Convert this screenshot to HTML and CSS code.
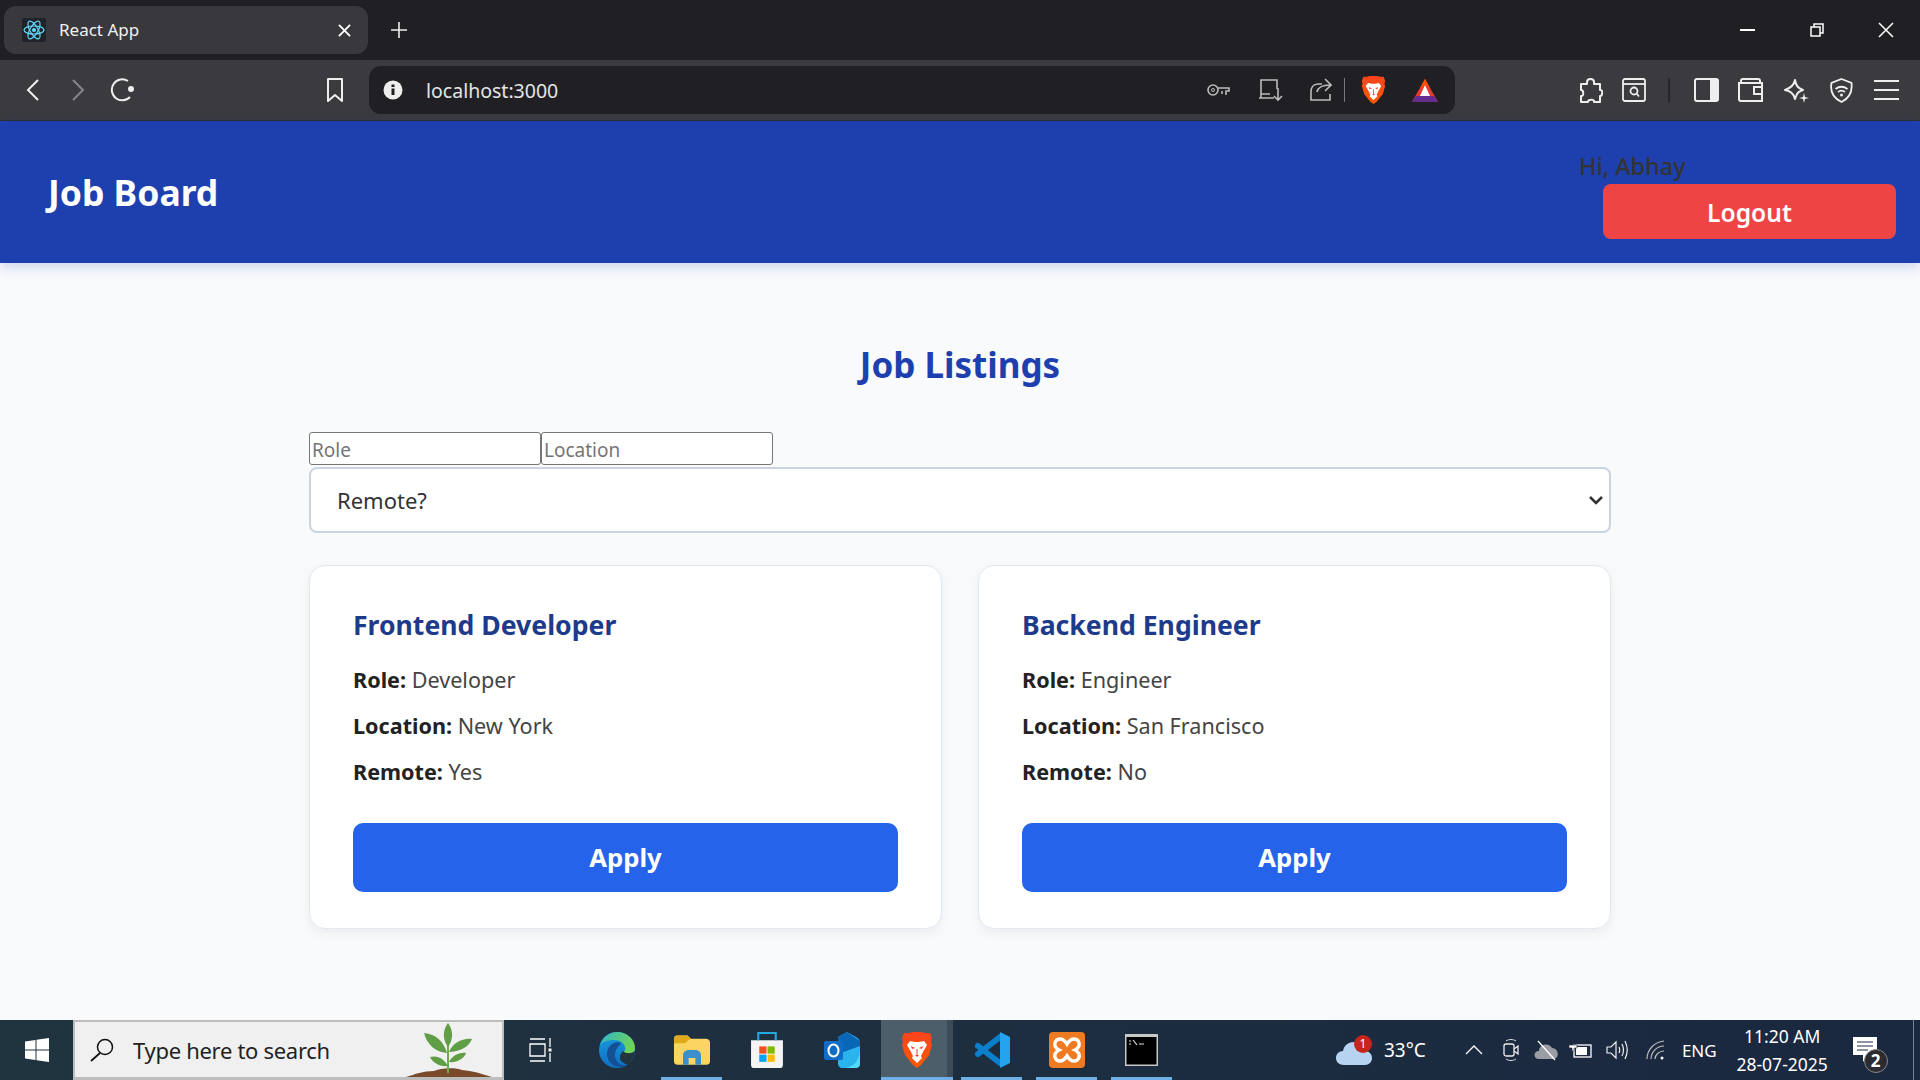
FILE: index.html
```html
<!DOCTYPE html>
<html lang="en">
<head>
  <meta charset="UTF-8" />
  <title>React App</title>
  <link rel="stylesheet" href="styles.css">
</head>
<body>

  <svg class="defs" width="0" height="0">
    <defs>
      <linearGradient id="edgeBlue" x1="0" y1="0" x2="0" y2="1">
        <stop offset="0" stop-color="#1b9de2"/>
        <stop offset="1" stop-color="#0f6fc0"/>
      </linearGradient>
      <linearGradient id="edgeGreen" x1="0" y1="0" x2="1" y2="0.4">
        <stop offset="0" stop-color="#2fb5c8"/>
        <stop offset="1" stop-color="#6fd45a"/>
      </linearGradient>
      <linearGradient id="braveFill" x1="0" y1="0" x2="0" y2="1">
        <stop offset="0" stop-color="#f8431f"/>
        <stop offset="1" stop-color="#ff5a00"/>
      </linearGradient>
    </defs>
    <symbol id="brave" viewBox="0 0 30 36">
      <path d="M7 1l3-1h10l3 1h5l2 5-1 4 1 3-3 10-8 10-4 3-4-3-8-10-3-10 1-3-1-4 2-5z" fill="url(#braveFill)"/>
      <path d="M8 9l5 1h4l5-1 3 4-4 7-2 4 1 2-5 5-5-5 1-2-2-4-4-7z" fill="#fff"/>
      <path d="M9 14l4 2-3 1zM21 14l-4 2 3 1zM13 23h4l-2 2z" fill="#f8431f"/>
      <path d="M15 17v6" stroke="#f8431f"/>
    </symbol>
  </svg>

  <!-- browser tabs -->
  <div class="tabstrip">
    <div class="tab">
      <svg class="favicon" viewBox="0 0 24 24">
        <rect width="24" height="24" rx="2" fill="#20232a"/>
        <g fill="none" stroke="#61dafb" stroke-width="1.2">
          <ellipse cx="12" cy="12" rx="10" ry="4"/>
          <ellipse cx="12" cy="12" rx="10" ry="4" transform="rotate(60 12 12)"/>
          <ellipse cx="12" cy="12" rx="10" ry="4" transform="rotate(120 12 12)"/>
        </g>
        <circle cx="12" cy="12" r="2" fill="#61dafb"/>
      </svg>
      <span class="tab-title">React App</span>
      <svg class="tab-close" viewBox="0 0 14 14"><path d="M1 1l12 12M13 1L1 13" stroke="#fff" stroke-width="2"/></svg>
    </div>
    <svg class="new-tab" viewBox="0 0 16 16"><path d="M8 0v16M0 8h16" stroke="#eee" stroke-width="1.6"/></svg>
    <div class="window-btns">
      <svg class="win-min" viewBox="0 0 15 2"><path d="M0 1h15" stroke="#fff" stroke-width="2"/></svg>
      <svg class="win-restore" viewBox="0 0 14 14"><path d="M1 4h9v9H1zM4 4V1h9v9h-3" fill="none" stroke="#fff" stroke-width="1.5"/></svg>
      <svg class="win-close" viewBox="0 0 16 16"><path d="M1 1l14 14M15 1L1 15" stroke="#fff" stroke-width="1.5"/></svg>
    </div>
  </div>

  <!-- browser toolbar -->
  <div class="toolbar">
    <svg class="nav-back" viewBox="0 0 13 22"><path d="M12 1L2 11l10 10" fill="none" stroke="#eee" stroke-width="2"/></svg>
    <svg class="nav-forward" viewBox="0 0 13 22"><path d="M1 1l10 10L1 21" fill="none" stroke="#85858a" stroke-width="2"/></svg>
    <svg class="nav-reload" viewBox="0 0 25 24"><path d="M20 19a10.500 10.500 0 1 1-2-16" fill="none" stroke="#eee" stroke-width="2"/><circle cx="21" cy="11" r="3" fill="#eee"/></svg>
    <svg class="nav-bookmark" viewBox="0 0 18 24"><path d="M2 1h14v22l-7-6-7 6z" fill="none" stroke="#eee" stroke-width="2" stroke-linejoin="round"/></svg>
    <div class="urlbar">
      <svg class="url-info" viewBox="0 0 20 20"><circle cx="10" cy="10" r="9.500" fill="#eee"/><path d="M8.500 8.500h3V15h-3zM8.500 4.500h3v2.500h-3z" fill="#202024"/></svg>
      <span class="url-text">localhost:3000</span>
      <svg class="url-key" viewBox="0 0 23 14"><circle cx="6" cy="7" r="5" fill="none" stroke="#bbb" stroke-width="1.600"/><circle cx="6" cy="7" r="1.500" fill="none" stroke="#bbb"/><path d="M11 5h11v3h-3v4M15 8v3" fill="none" stroke="#bbb" stroke-width="1.600"/></svg>
      <svg class="url-install" viewBox="0 0 25 24"><path d="M19 11V2H3v14M1 20h15M3 20v-4h9" fill="none" stroke="#bbb" stroke-width="1.600"/><path d="M20 10v12M16 18l4 4 4-4" fill="none" stroke="#bbb" stroke-width="1.600"/></svg>
      <svg class="url-share" viewBox="0 0 23 24"><path d="M13 6H9c-5 0-7 4-7 8v8h19v-6" fill="none" stroke="#bbb" stroke-width="1.600"/><path d="M8 14c1-5 5-7 13-7M16 1l6 6-6 6" fill="none" stroke="#bbb" stroke-width="1.600"/></svg>
      <span class="url-sep"></span>
      <svg class="url-brave"><use href="#brave"/></svg>
      <svg class="url-bat" viewBox="0 0 26 23"><path d="M13 0l13 23H0z" fill="#e8392f"/><path d="M0 23l4-6h18l4 6z" fill="#662d91"/><path d="M13 6l5 11H8z" fill="#fff"/><path d="M13 0l5 9-5-3-5 3z" fill="#ff5000"/></svg>
    </div>
    <div class="toolbar-right">
      <svg class="tool-puzzle" viewBox="0 0 25 25"><path d="M9 4c0-4 7-4 7 0v2h6v6c3-1 3 6 0 6v6h-6c1-3-6-3-6 0H3v-6c3 1 3-6 0-6V6h6z" fill="none" stroke="#eee" stroke-width="2" stroke-linejoin="round"/></svg>
      <svg class="tool-reader" viewBox="0 0 24 24"><rect x="1" y="1" width="22" height="22" rx="2" fill="none" stroke="#eee" stroke-width="1.800"/><path d="M1 6h22" stroke="#eee" stroke-width="1.800"/><circle cx="12" cy="13" r="3.500" fill="none" stroke="#eee" stroke-width="1.800"/><path d="M14.500 15.500l2.500 3" stroke="#eee" stroke-width="1.800"/></svg>
      <span class="tool-sep"></span>
      <svg class="tool-panel" viewBox="0 0 25 24"><rect x="1" y="1" width="23" height="22" rx="2" fill="none" stroke="#eee" stroke-width="2"/><rect x="16" y="1" width="8" height="22" fill="#eee"/></svg>
      <svg class="tool-wallet" viewBox="0 0 25 24"><path d="M3 5V3c0-1 1-2 2-2h15c1 0 2 1 2 2v2M1 5h23v18H3c-1 0-2-1-2-2zM24 9h-8v7h8" fill="none" stroke="#eee" stroke-width="2"/></svg>
      <svg class="tool-stars" viewBox="0 0 25 25"><path d="M11 2c1 6 3 8 8 10-3 1-5 2-6 4l-2 5c-1-5-4-8-10-9 6-2 9-5 10-10z" fill="none" stroke="#eee" stroke-width="2" stroke-linejoin="round"/><path d="M20 15l1 4 4 1-4 1-1 4-1-4-4-1 4-1z" fill="#eee"/></svg>
      <svg class="tool-shield" viewBox="0 0 23 25"><path d="M11.500 1l10 4c1 8-2 15-10 19C3 20 0 13 1.500 5z" fill="none" stroke="#eee" stroke-width="1.800"/><path d="M5.500 11c4-3 8-3 12 0M8 14c2-1.500 5-1.500 7 0" fill="none" stroke="#eee" stroke-width="1.800"/><circle cx="11.500" cy="17" r="1.500" fill="#eee"/></svg>
      <svg class="tool-menu" viewBox="0 0 25 22"><path d="M0 2h25M0 11h25M0 20h25" stroke="#eee" stroke-width="2"/></svg>
    </div>
  </div>

  <!-- the app -->
  <header class="app-header">
    <h1>Job Board</h1>
    <div class="user-box">
      <span class="greeting">Hi, Abhay</span>
      <button class="logout-btn">Logout</button>
    </div>
  </header>

  <main class="content">
    <h2 class="page-title">Job Listings</h2>

    <div class="filters">
      <input class="filter-input" type="text" placeholder="Role"><input class="filter-input" type="text" placeholder="Location">
      <select class="filter-select">
        <option>Remote?</option>
        <option>Yes</option>
        <option>No</option>
      </select>
    </div>

    <div class="job-grid">
      <div class="job-card">
        <h3>Frontend Developer</h3>
        <p><strong>Role:</strong> Developer</p>
        <p><strong>Location:</strong> New York</p>
        <p><strong>Remote:</strong> Yes</p>
        <button class="apply-btn">Apply</button>
      </div>
      <div class="job-card">
        <h3>Backend Engineer</h3>
        <p><strong>Role:</strong> Engineer</p>
        <p><strong>Location:</strong> San Francisco</p>
        <p><strong>Remote:</strong> No</p>
        <button class="apply-btn">Apply</button>
      </div>
    </div>
  </main>

  <!-- windows taskbar -->
  <footer class="taskbar">
    <div class="start">
      <svg viewBox="0 0 24 24"><path d="M0 3.500l10.500-1.500v9.500H0zM11.500 1.800L24 0v11.500H11.500zM0 12.500h10.500V22L0 20.500zM11.500 12.500H24V24l-12.500-1.800z" fill="#fff"/></svg>
    </div>
    <div class="search">
      <svg class="search-icon" viewBox="0 0 24 24"><circle cx="15" cy="9" r="7.500" fill="none" stroke="#111" stroke-width="1.500"/><path d="M10 15L1 23" stroke="#111" stroke-width="1.700"/></svg>
      <span class="search-text">Type here to search</span>
      <svg class="search-plant" viewBox="0 0 100 56">
        <path d="M0 56c14-3 22-8 36-8 5-3 22-4 28-1 12 1 24 5 36 9z" fill="#7a4a2c"/>
        <path d="M50 50V8" stroke="#6fae4f" stroke-width="2"/>
        <path d="M50 0c6 8 5 17 0 24-5-7-6-16 0-24zM26 10c12 1 20 9 23 20-11-1-20-8-23-20zM74 16c-3 8-13 13-23 13 4-9 13-14 23-13zM32 34c8-2 14 2 18 9-8 1-15-3-18-9zM68 30c-2 6-10 10-17 9 3-6 10-10 17-9z" fill="#5f9e45"/>
      </svg>
    </div>
    <div class="task-slot">
      <svg class="task-view" viewBox="0 0 24 24"><path d="M2 1h15M2 23h15M2 6h15v12H2zM22 0v9M22 15v9" fill="none" stroke="#fff" stroke-width="1.300"/><rect x="20.500" y="10.500" width="3" height="3" fill="#fff"/></svg>
    </div>
    <div class="task-slot">
      <svg class="task-icon" viewBox="0 0 36 36">
        <circle cx="18" cy="18" r="18" fill="url(#edgeBlue)"/>
        <path d="M1 13C4 5 11 0 18 0c10 0 18 7 18 16 0 4-3 6-7 6-3 0-5-1-5-2 2-1 3-3 2-5-1-4-5-7-10-7C10 8 4 9 1 13z" fill="url(#edgeGreen)"/>
        <path d="M24 19c3 3 8 3 12 0-1 6-3 10-7 14-2-1-5-2-7-4-2-3-1-7 2-10z" fill="#22343f"/>
        <path d="M20 10c-7 0-12 5-12 12 0 7 6 13 13 13 2 0 4-.5 6-1.500-6 0-11-4-11-10 0-5 2-9 6-11z" fill="#154f94"/>
      </svg>
    </div>
    <div class="task-slot open">
      <svg class="task-icon" viewBox="0 0 32 26">
        <path d="M0 3c0-2 1-3 3-3h9l3 3h13c2 0 4 1 4 3v17c0 2-1 3-3 3H3c-2 0-3-1-3-3z" fill="#fcd462"/>
        <path d="M0 7V3c0-2 1-3 3-3h9l3 3-3 2-2 2z" fill="#e2a91b"/>
        <path d="M8 26v-8c0-3 2-5 5-5h6c3 0 5 2 5 5v8h-5v-6h-6v6z" fill="#3b8fcb"/>
      </svg>
    </div>
    <div class="task-slot">
      <svg class="task-icon" viewBox="0 0 35 35">
        <path d="M2 8h31v24c0 2-1 3-3 3H5c-2 0-3-1-3-3z" fill="#f4f4f4"/>
        <path d="M9 8V1h17v7" fill="none" stroke="#27a9e0" stroke-width="2"/>
        <rect x="10" y="14" width="7" height="7" fill="#f25022"/>
        <rect x="18" y="14" width="7" height="7" fill="#7fba00"/>
        <rect x="10" y="22" width="7" height="7" fill="#00a4ef"/>
        <rect x="18" y="22" width="7" height="7" fill="#ffb900"/>
      </svg>
    </div>
    <div class="task-slot">
      <svg class="task-icon" viewBox="0 0 36 36">
        <path d="M14 5l9-5 9 5c2 1 4 3 4 5v22c0 2-2 4-4 4H18c-2 0-4-2-4-4z" fill="#2ab4ee"/>
        <path d="M14 5l9-5 13 9v5l-22 8z" fill="#0a66b7"/>
        <path d="M22 36c8-2 14-7 14-20v16c0 2-2 4-4 4z" fill="#4fdcf8"/>
        <rect y="9" width="19" height="19" rx="2" fill="#0f6cc7"/>
        <ellipse cx="9.500" cy="18.500" rx="5" ry="6" fill="none" stroke="#fff" stroke-width="2"/>
      </svg>
    </div>
    <div class="task-slot open active">
      <svg class="task-icon"><use href="#brave"/></svg>
    </div>
    <div class="task-slot open">
      <svg class="task-icon" viewBox="0 0 36 36">
        <path d="M26 5L4 22M4 14l22 17" fill="none" stroke="#0b7fcc" stroke-width="6" stroke-linecap="round"/>
        <path d="M26 0l10 5v26l-10 5z" fill="#24a4ef"/>
      </svg>
    </div>
    <div class="task-slot open">
      <svg class="task-icon" viewBox="0 0 36 36">
        <rect width="36" height="36" rx="4" fill="#ee7a22"/>
        <path d="M11 7c3 0 5 2 7 5 2-3 4-5 7-5 4 0 6 4 5 7-1 2-2 3-4 4 2 1 3 2 4 4 1 3-1 7-5 7-3 0-5-2-7-5-2 3-4 5-7 5-4 0-6-4-5-7 1-2 2-3 4-4-2-1-3-2-4-4-1-3 1-7 5-7z" fill="none" stroke="#fff" stroke-width="3.500"/>
      </svg>
    </div>
    <div class="task-slot open">
      <svg class="task-icon cmd" viewBox="0 0 33 32">
        <rect width="33" height="32" fill="#c8c8c8"/>
        <rect x="1.500" y="3" width="30" height="27.500" fill="#000"/>
        <path d="M4 7h2M4 10h2M8 6l4 5M14 10h5" stroke="#ddd" stroke-width="1.200"/>
      </svg>
    </div>

    <div class="tray">
      <div class="weather">
        <svg class="weather-icon" viewBox="0 0 36 30">
          <path d="M8 30c-5 0-8-3-8-7s3-7 7-7c1-6 6-9 11-9 6 0 10 4 11 9 4 0 7 3 7 7s-3 7-7 7z" fill="#b7d3f2"/>
          <circle cx="27" cy="9" r="9" fill="#c4251c"/>
          <text class="weather-badge" x="27" y="13" text-anchor="middle">1</text>
        </svg>
        <span>33°C</span>
      </div>
      <svg class="tray-chevron" viewBox="0 0 18 10"><path d="M1 9l8-8 8 8" fill="none" stroke="#fff" stroke-width="1.300"/></svg>
      <svg class="tray-meet" viewBox="0 0 16 24"><path d="M3 3c3-2 7-2 10 0M3 21c3 2 7 2 10 0" fill="none" stroke="#ddd"/><rect x="1" y="6" width="10" height="12" rx="2" fill="none" stroke="#eee" stroke-width="1.300"/><path d="M11 11l4-3v8l-4-3" fill="none" stroke="#eee" stroke-width="1.300"/></svg>
      <svg class="tray-cloud" viewBox="0 0 24 22"><path d="M5 20c-6 0-6-8 0-8 0-7 10-9 13-3 7 0 8 11 1 11z" fill="#9a9ea3"/><path d="M4 2l17 19" stroke="#fff" stroke-width="1.300"/></svg>
      <svg class="tray-battery" viewBox="0 0 23 18"><rect x="5" y="4" width="17" height="12" fill="none" stroke="#fff" stroke-width="1.300"/><rect x="7" y="6" width="11" height="8" fill="#fff"/><path d="M2 0v4M6 0v4M0 4h8v3H5v3H3V7H0z" fill="#fff" stroke="#1b2a40" stroke-width=".6"/></svg>
      <svg class="tray-speaker" viewBox="0 0 22 20"><path d="M1 7h4l5-5v16l-5-5H1z" fill="none" stroke="#eee" stroke-width="1.200"/><path d="M13 7c1 2 1 4 0 6M16 4c2 4 2 8 0 12M19 1c3 6 3 12 0 18" fill="none" stroke="#eee" stroke-width="1.200"/></svg>
      <svg class="tray-wifi" viewBox="0 0 19 20"><path d="M1 19C1 10 8 2 18 1M5 19c0-7 6-13 13-13M9 19c0-4 4-8 9-8" fill="none" stroke="#bbb" stroke-width="1.200"/><circle cx="16" cy="18" r="1.500" fill="#fff"/></svg>
      <span class="tray-lang">ENG</span>
      <div class="clock">
        <span>11:20 AM</span>
        <span>28-07-2025</span>
      </div>
      <div class="notify">
        <svg class="notify-icon" viewBox="0 0 24 26"><path d="M0 0h24v18H15l-5 7v-7H0z" fill="#fff"/><path d="M4 5h16M4 9h16M4 13h11" stroke="#1b2a40" stroke-width="1.200"/></svg>
        <span class="notify-badge">2</span>
      </div>
      <span class="show-desktop"></span>
    </div>
  </footer>

</body>
</html>
```

FILE: styles.css
```css
* {
  box-sizing: border-box;
}

body {
  margin: 0;
  height: 1080px;
  display: flex;
  flex-direction: column;
  overflow: hidden;
  background: #f8fafc;
  font-family: 'Noto Sans', sans-serif;
  color: #333;
}

svg {
  display: block;
  flex: none;
}

.defs {
  position: absolute;
}

/* Browser tabs */
.tabstrip {
  height: 60px;
  flex: none;
  display: flex;
  align-items: center;
  background: #1f1f24;
  padding-left: 4px;
}

.tab {
  width: 364px;
  height: 48px;
  display: flex;
  align-items: center;
  background: #38383d;
  border-radius: 12px;
  padding: 0 17px 0 18px;
}

.favicon {
  width: 24px;
  height: 24px;
}

.tab-title {
  flex: 1;
  margin-left: 13px;
  margin-bottom: 2px;
  color: #f2f2f2;
  font-size: 17px;
}

.tab-close {
  width: 13px;
  height: 13px;
}

.new-tab {
  width: 16px;
  height: 16px;
  margin-left: 23px;
}

.window-btns {
  margin-left: auto;
  margin-right: 26px;
  display: flex;
  align-items: center;
}

.win-min {
  width: 15px;
  height: 2px;
}

.win-restore {
  width: 14px;
  height: 14px;
  margin-left: 55px;
}

.win-close {
  width: 16px;
  height: 16px;
  margin-left: 54px;
}

/* Browser toolbar */
.toolbar {
  height: 61px;
  flex: none;
  display: flex;
  align-items: center;
  background: #3a3a3f;
  border-bottom: 1px solid #2c2c30;
  padding-left: 26px;
}

.nav-back,
.nav-forward {
  width: 13px;
  height: 22px;
}

.nav-forward {
  margin-left: 33px;
}

.nav-reload {
  width: 25px;
  height: 24px;
  margin-left: 25px;
}

.nav-bookmark {
  width: 18px;
  height: 24px;
  margin-left: 191px;
}

.urlbar {
  width: 1086px;
  height: 48px;
  margin-left: 25px;
  display: flex;
  align-items: center;
  background: #202024;
  border-radius: 12px;
  padding-left: 14px;
}

.url-info {
  width: 20px;
  height: 20px;
}

.url-text {
  margin-left: 23px;
  color: #e4e4e4;
  font-size: 19.5px;
}

.url-key {
  width: 23px;
  height: 14px;
  margin-left: auto;
}

.url-install {
  width: 25px;
  height: 24px;
  margin-left: 28px;
}

.url-share {
  width: 23px;
  height: 24px;
  margin-left: 26px;
}

.url-sep {
  width: 1px;
  height: 24px;
  margin-left: 12px;
  background: #77777c;
}

.url-brave {
  width: 25px;
  height: 28px;
  margin-left: 16px;
}

.url-bat {
  width: 26px;
  height: 23px;
  margin-left: 26px;
  margin-right: 17px;
}

.toolbar-right {
  margin-left: 123px;
  display: flex;
  align-items: center;
}

.tool-puzzle,
.tool-stars {
  width: 25px;
  height: 25px;
}

.tool-reader {
  width: 24px;
  height: 24px;
  margin-left: 19px;
}

.tool-sep {
  width: 2px;
  height: 24px;
  margin-left: 22px;
  background: #27272b;
}

.tool-panel {
  width: 25px;
  height: 24px;
  margin-left: 24px;
}

.tool-wallet {
  width: 25px;
  height: 24px;
  margin-left: 19px;
}

.tool-stars {
  margin-left: 21px;
}

.tool-shield {
  width: 23px;
  height: 25px;
  margin-left: 21px;
}

.tool-menu {
  width: 25px;
  height: 22px;
  margin-left: 21px;
}

/* Header */
.app-header {
  height: 142px;
  flex: none;
  position: relative;
  display: flex;
  justify-content: space-between;
  align-items: center;
  background: #1e40af;
  box-shadow: 0 4px 12px rgba(30, 64, 175, 0.2);
  padding: 0 24px 0 48px;
}

.app-header h1 {
  margin: 0;
  color: #fff;
  font-size: 35.5px;
  font-weight: 700;
}

.user-box {
  width: 317px;
  margin-top: 5px;
}

.greeting {
  display: block;
  margin-bottom: 2px;
  font-size: 23.4px;
  font-weight: 500;
  line-height: 32px;
}

.logout-btn {
  display: block;
  width: 293px;
  height: 55px;
  margin-left: 24px;
  padding-top: 3px;
  border: none;
  border-radius: 8px;
  background: #ef4444;
  color: #fff;
  font-family: inherit;
  font-size: 24.6px;
  font-weight: 600;
}

/* Listing */
.content {
  flex: 1;
  width: 1302px;
  margin: 0 auto;
  padding-top: 76px;
}

.page-title {
  margin: 0 0 41px;
  text-align: center;
  color: #1e40af;
  font-size: 35px;
  font-weight: 700;
  line-height: 52px;
}

.filters {
  font-size: 0;
}

.filter-input {
  width: 232px;
  height: 33px;
  padding: 2px 2px 0;
  border: 1px solid #767676;
  border-radius: 3px;
  background: #fff;
  font-family: inherit;
  font-size: 19px;
  vertical-align: top;
}

.filter-input::placeholder {
  color: #757575;
}

.filter-select {
  display: block;
  width: 100%;
  height: 66px;
  margin-top: 2px;
  padding: 0 26px;
  border: 2px solid #cbd5e1;
  border-radius: 8px;
  appearance: none;
  background: #fff url("data:image/svg+xml,%3Csvg xmlns='http://www.w3.org/2000/svg' viewBox='0 0 14 9'%3E%3Cpath d='M1 1l6 6 6-6' fill='none' stroke='%23333' stroke-width='2.600'/%3E%3C/svg%3E") no-repeat right 6px center / 14px 9px;
  color: #333;
  font-family: inherit;
  font-size: 22px;
}

.job-grid {
  display: grid;
  grid-template-columns: 1fr 1fr;
  gap: 36px;
  margin-top: 32px;
}

.job-card {
  height: 364px;
  padding: 40px 43px 0;
  background: #fff;
  border: 1px solid #e2e8f0;
  border-radius: 16px;
  box-shadow: 0 4px 12px rgba(0, 0, 0, 0.06);
}

.job-card h3 {
  margin: 0 0 21px;
  color: #1e3a8a;
  font-size: 26.6px;
  font-weight: 700;
  line-height: 38px;
}

.job-card p {
  margin: 0 0 16px;
  color: #444;
  font-size: 21.6px;
  line-height: 30px;
}

.job-card strong {
  color: #222;
}

.apply-btn {
  width: 100%;
  height: 69px;
  margin-top: 20px;
  border: none;
  border-radius: 10px;
  background: #2563eb;
  color: #fff;
  font-family: inherit;
  font-size: 25.7px;
  font-weight: 700;
}

/* Taskbar */
.taskbar {
  height: 60px;
  flex: none;
  display: flex;
  background: linear-gradient(to right, #20343f, #1a2840);
  color: #fff;
}

.start {
  width: 73px;
  display: flex;
  align-items: center;
  justify-content: center;
}

.start svg {
  width: 24px;
  height: 24px;
}

.search {
  width: 431px;
  position: relative;
  display: flex;
  align-items: center;
  background: #f0f0f0;
  border: 2px solid #bdbdbd;
  border-bottom-width: 3px;
  padding-left: 15px;
  overflow: hidden;
}

.search-icon {
  width: 24px;
  height: 24px;
}

.search-text {
  margin-left: 19px;
  color: #222;
  font-size: 22px;
  letter-spacing: -0.3px;
}

.search-plant {
  position: absolute;
  right: 4px;
  bottom: -2px;
  width: 100px;
  height: 56px;
}

.task-slot {
  width: 75px;
  position: relative;
  display: flex;
  align-items: center;
  justify-content: center;
}

.task-slot.open::after {
  content: '';
  position: absolute;
  left: 7px;
  right: 7px;
  bottom: 0;
  height: 3px;
  background: #6fb1e6;
}

.task-slot.active {
  background: linear-gradient(to right, transparent 2px, #4c5e69 2px, #4c5e69 68px, #3c4b56 68px, #3c4b56 74px, transparent 74px);
}

.task-slot.active::after {
  left: 2px;
  right: 1px;
}

.task-view {
  width: 24px;
  height: 24px;
  margin-right: 3px;
}

.task-icon {
  width: 36px;
  height: 36px;
}

.task-icon.cmd {
  width: 33px;
  height: 32px;
}

.tray {
  flex: 1;
  display: flex;
  align-items: center;
  padding-left: 157px;
}

.weather {
  display: flex;
  align-items: center;
  gap: 12px;
  font-size: 19px;
}

.weather-icon {
  width: 36px;
  height: 30px;
}

.weather-badge {
  fill: #fff;
  font-size: 12px;
}

.tray-chevron {
  width: 18px;
  height: 10px;
  margin-left: 39px;
}

.tray-meet {
  width: 16px;
  height: 24px;
  margin-left: 20px;
}

.tray-cloud {
  width: 24px;
  height: 22px;
  margin-left: 15px;
}

.tray-battery {
  width: 23px;
  height: 18px;
  margin-left: 11px;
}

.tray-speaker {
  width: 22px;
  height: 20px;
  margin-left: 14px;
}

.tray-wifi {
  width: 19px;
  height: 20px;
  margin-left: 18px;
}

.tray-lang {
  margin-left: 17px;
  font-size: 17px;
}

.clock {
  width: 93px;
  margin-left: 19px;
  display: flex;
  flex-direction: column;
  gap: 6px;
  text-align: center;
  font-size: 17.5px;
  line-height: 22px;
}

.notify {
  position: relative;
  margin-left: 24px;
}

.notify-icon {
  width: 24px;
  height: 26px;
}

.notify-badge {
  position: absolute;
  left: 11px;
  top: 12px;
  width: 24px;
  height: 24px;
  border-radius: 50%;
  border: 1px solid #888;
  background: #2b2b30;
  text-align: center;
  font-size: 17px;
  font-weight: 700;
  line-height: 22px;
}

.show-desktop {
  width: 7px;
  height: 100%;
  margin-left: auto;
  border-left: 1px solid #77808c;
}
```
